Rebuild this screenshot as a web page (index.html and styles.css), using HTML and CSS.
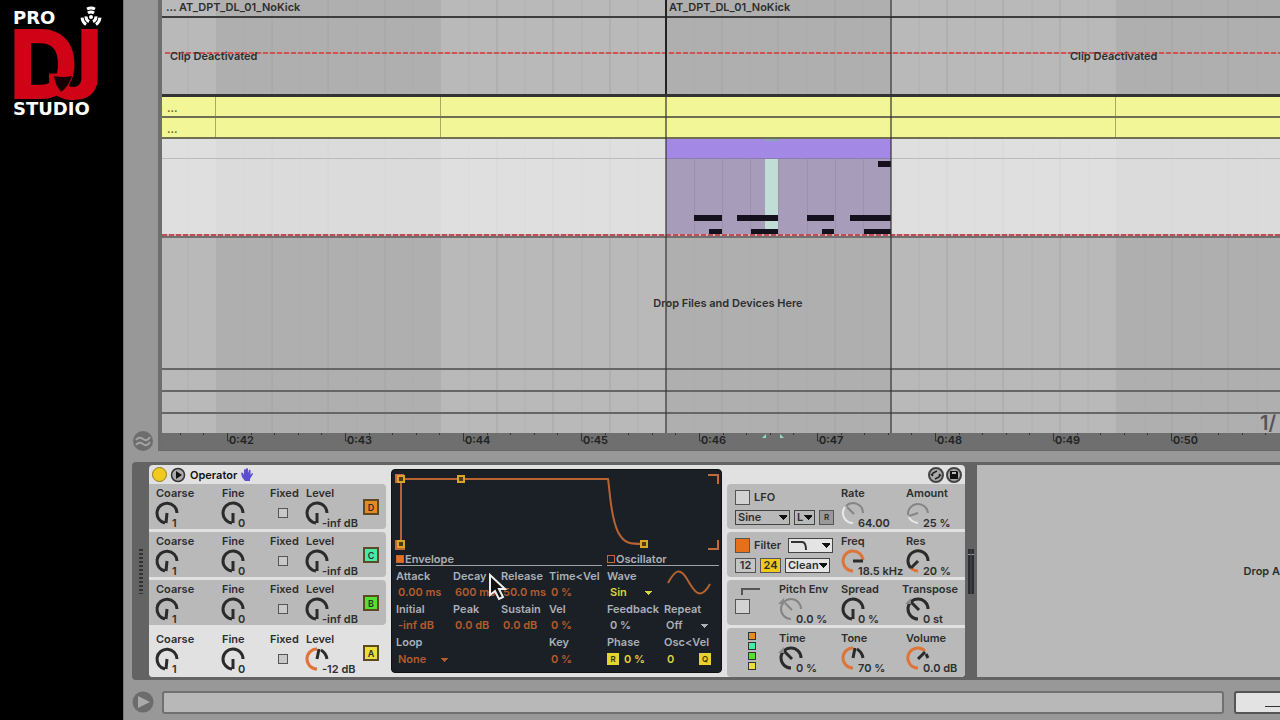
FILE: index.html
```html
<!DOCTYPE html>
<html lang="en">
<head>
<meta charset="utf-8">
<title>Arrangement – Operator</title>
<link rel="stylesheet" href="styles.css">
</head>
<body>
<svg class="defs" aria-hidden="true">
  <defs>
    <symbol id="dial-min" viewBox="0 0 24 24"><path d="M11 22A10 10 0 1 1 22 12M12 12V22"/></symbol>
    <symbol id="dial-one" viewBox="0 0 24 24"><path d="M10 22A10 10 0 1 1 22 12M12 12L11 22"/></symbol>
    <symbol id="dial-diag" viewBox="0 0 24 24"><path d="M12 22A10 10 0 1 1 22 12M13 13L6 6"/></symbol>
    <g id="blade"><path d="M-3 -4Q0 -6 3 -4"/><path d="M-4 -8Q0 -10 4 -8"/></g>
  </defs>
</svg>

<aside class="brand">
  <div class="brand-top"><span>PRO</span>
    <svg width="24" height="22" viewBox="0 0 24 22" fill="none" stroke="#fff" stroke-width="3"><circle cx="12" cy="12" r="2" fill="#fff" stroke="none"/><use href="#blade" transform="translate(12 12)"/><use href="#blade" transform="translate(12 12) rotate(120)"/><use href="#blade" transform="translate(12 12) rotate(240)"/></svg>
  </div>
  <div class="brand-mark"><span>D</span><span class="brand-j">J</span>
    <svg class="brand-cut" width="20" height="18" viewBox="0 0 20 18"><path d="M1 1Q10 3 19 1Q16 11 8 17Q2 10 1 1Z"/></svg>
  </div>
  <div class="brand-bottom">STUDIO</div>
</aside>

<main class="app">
  <section class="arrange">
    <div class="gutter">
      <button class="round" aria-label="Show envelope"><svg width="20" height="20" viewBox="0 0 20 20"><circle cx="10" cy="10" r="10" fill="#6d6d6d"/><path d="M3 9Q6 5 10 8T17 6M3 14Q6 10 10 13T17 11" fill="none" stroke="#a3a3a3" stroke-width="2"/></svg></button>
    </div>
    <div class="timeline">
      <div class="tracks">
        <svg class="grid" width="100%" height="100%">
          <defs><pattern id="bars" x="54" width="450" height="600" patternUnits="userSpaceOnUse">
            <rect width="450" height="600" fill="#b9b9b9"/><rect width="225" height="600" fill="#afafaf"/>
            <path d="M28 0V600M84 0V600M141 0V600M197 0V600M253 0V600M309 0V600M366 0V600M422 0V600" stroke="#a9a9a9" opacity=".6"/>
            <path d="M56 0V600M112 0V600M169 0V600M281 0V600M337 0V600M394 0V600" stroke="#a0a0a0" opacity=".75"/>
          </pattern></defs>
          <rect width="100%" height="100%" fill="url(#bars)"/>
        </svg>
        <div class="lane names"><span class="name-a">... AT_DPT_DL_01_NoKick</span><span>AT_DPT_DL_01_NoKick</span></div>
        <div class="lane audio"><span class="off-a">Clip Deactivated</span><span>Clip Deactivated</span></div>
        <div class="lane yellow">...</div>
        <div class="lane yellow">...</div>
        <div class="lane midi">
          <svg class="clip" width="225" height="97" viewBox="0 0 225 97">
            <rect width="225" height="97" fill="#a79dbb"/>
            <path d="M28.500 19V97M56.500 19V97M84.500 19V97M112.500 19V97M141.500 19V97M169.500 19V97M197.500 19V97" stroke="#9c92b0"/>
            <rect x="99" y="19" width="13" height="73" fill="#c1ded6"/>
            <rect width="225" height="19" fill="#a488e6"/><rect x="99" width="13" height="2" fill="#86a5b8"/>
            <path d="M0 19.500H225" stroke="#8b7cae"/>
            <path d="M212 22h13v6h-13zM28 76h28v6h-28zM71 76h41v6h-41zM141 76h27v6h-27zM184 76h41v6h-41zM43 90h13v5h-13zM85 90h27v5h-27zM156 90h12v5h-12zM198 90h27v5h-27z" fill="#15111c"/>
          </svg>
        </div>
        <div class="lane drop">Drop Files and Devices Here</div>
        <div class="lane thin"></div>
        <div class="lane thin"></div>
        <div class="lane last"><span>1/</span></div>
        <i class="edge edge-start"></i><i class="edge edge-dark"></i><i class="edge edge-end"></i>
      </div>
      <div class="ruler">
        <svg class="ticks" width="100%" height="10"><defs><pattern id="ticks" x="65" width="118" height="10" patternUnits="userSpaceOnUse"><path d="M.5 0V8H3" fill="none" stroke="#333"/><path d="M24.500 0V2M47.500 0V2M71.500 0V2M94.500 0V2" stroke="#333"/></pattern></defs><rect width="100%" height="10" fill="url(#ticks)"/><path d="M600 5l4-4v4zM618 1l4 4h-4z" fill="#8fdcc8"/></svg>
        <span>0:42</span><span>0:43</span><span>0:44</span><span>0:45</span><span>0:46</span><span>0:47</span><span>0:48</span><span>0:49</span><span>0:50</span>
      </div>
    </div>
  </section>

  <section class="rack">
    <div class="handle"><i></i></div>
    <div class="device">
      <div class="oscs">
        <header class="title">
          <button class="power" aria-label="Device on"></button>
          <button class="round" aria-label="Fold"><svg width="16" height="16" viewBox="0 0 16 16"><circle cx="8" cy="8" r="6.500" fill="#aaa" stroke="#333" stroke-width="1.500"/><path d="M6 4L12 8L6 12Z" fill="#111"/></svg></button>
          <h1>Operator</h1>
          <svg width="12" height="13" viewBox="0 0 12 13" fill="#5b4fd0"><path d="M3 7V2Q4 0 5 2V5V1Q6-1 7 1V5L8 2Q10 1 9.500 3V7L11 5Q12 5 12 6L9 11V13H4L1 9L0 5Q1 4 2 5Z"/></svg>
        </header>
        <div class="osc">
          <div class="param"><label for="c1">Coarse</label><div class="knob"><svg><use href="#dial-one"/></svg><input type="range" id="c1"><output>1</output></div></div>
          <div class="param"><label for="f1">Fine</label><div class="knob"><svg><use href="#dial-min"/></svg><input type="range" id="f1"><output>0</output></div></div>
          <div class="param fixed"><label for="x1">Fixed</label><input type="checkbox" id="x1"></div>
          <div class="param"><label for="l1">Level</label><div class="knob"><svg><use href="#dial-min"/></svg><input type="range" id="l1"><output>-inf dB</output></div></div>
          <button class="letter orange">D</button>
        </div>
        <div class="osc">
          <div class="param"><label for="c2">Coarse</label><div class="knob"><svg><use href="#dial-one"/></svg><input type="range" id="c2"><output>1</output></div></div>
          <div class="param"><label for="f2">Fine</label><div class="knob"><svg><use href="#dial-min"/></svg><input type="range" id="f2"><output>0</output></div></div>
          <div class="param fixed"><label for="x2">Fixed</label><input type="checkbox" id="x2"></div>
          <div class="param"><label for="l2">Level</label><div class="knob"><svg><use href="#dial-min"/></svg><input type="range" id="l2"><output>-inf dB</output></div></div>
          <button class="letter mint">C</button>
        </div>
        <div class="osc">
          <div class="param"><label for="c3">Coarse</label><div class="knob"><svg><use href="#dial-one"/></svg><input type="range" id="c3"><output>1</output></div></div>
          <div class="param"><label for="f3">Fine</label><div class="knob"><svg><use href="#dial-min"/></svg><input type="range" id="f3"><output>0</output></div></div>
          <div class="param fixed"><label for="x3">Fixed</label><input type="checkbox" id="x3"></div>
          <div class="param"><label for="l3">Level</label><div class="knob"><svg><use href="#dial-min"/></svg><input type="range" id="l3"><output>-inf dB</output></div></div>
          <button class="letter green">B</button>
        </div>
        <div class="osc active">
          <div class="param"><label for="c4">Coarse</label><div class="knob"><svg><use href="#dial-one"/></svg><input type="range" id="c4"><output>1</output></div></div>
          <div class="param"><label for="f4">Fine</label><div class="knob"><svg><use href="#dial-min"/></svg><input type="range" id="f4"><output>0</output></div></div>
          <div class="param fixed"><label for="x4">Fixed</label><input type="checkbox" id="x4"></div>
          <div class="param"><label for="l4">Level</label><div class="knob"><svg viewBox="0 0 24 24"><path class="hot" d="M12 22A10 10 0 0 1 12 2"/><path d="M12 12L14 2M16 3Q21 6 22 12"/></svg><input type="range" id="l4"><output>-12 dB</output></div></div>
          <button class="letter yellowish">A</button>
        </div>
      </div>

      <div class="display">
        <svg class="curve" width="331" height="82" viewBox="0 0 331 82" fill="none">
          <path d="M10 75V9H217C219 20 219 45 227 62C233 74 240 74 253 74" stroke="#b86432" stroke-width="2"/>
          <path d="M317 5H327V14M317 79H327V70M5 70V79H14M5 13V5H13" stroke="#c06c3a" stroke-width="2"/>
          <path d="M7 6h6v6h-6zM67 6h6v6h-6zM7 71h6v6h-6zM250 71h6v6h-6z" fill="#4a3a16" stroke="#d9a428" stroke-width="2"/>
        </svg>
        <div class="halves">
          <div class="half">
            <h2><i class="tab on"></i>Envelope</h2>
            <div class="table env">
              <label>Attack</label><label>Decay</label><label>Release</label><label>Time&lt;Vel</label>
              <output>0.00 ms</output><output>600 ms</output><output>50.0 ms</output><output>0 %</output>
              <label>Initial</label><label>Peak</label><label>Sustain</label><label>Vel</label>
              <output>-inf dB</output><output>0.0 dB</output><output>0.0 dB</output><output>0 %</output>
              <label for="loop">Loop</label><span></span><span></span><label>Key</label>
              <select id="loop" class="hotsel"><option>None</option></select><output>0 %</output>
            </div>
          </div>
          <div class="half">
            <h2><i class="tab"></i>Oscillator</h2>
            <div class="table wave">
              <label for="wave">Wave</label><svg class="sine" width="44" height="26" viewBox="0 0 44 26" fill="none" stroke="#b5622f" stroke-width="2"><path d="M1 13C8 0 13-3 20 9S33 32 43 14"/></svg>
              <select id="wave" class="sunsel"><option>Sin</option></select>
              <label>Feedback</label><label for="rep">Repeat</label>
              <output class="pale">0 %</output><select id="rep" class="palesel"><option>Off</option></select>
              <label>Phase</label><label>Osc&lt;Vel</label>
              <div class="pair"><button class="mini">R</button><output>0 %</output></div><div class="pair spread"><output>0</output><button class="mini">Q</button></div>
            </div>
          </div>
        </div>
      </div>

      <div class="global">
        <div class="tools">
          <button class="round" aria-label="Hot-swap"><svg width="16" height="16" viewBox="0 0 16 16"><circle cx="8" cy="8" r="7" fill="#aaa" stroke="#444" stroke-width="2"/><path d="M4 9L5 6L9 4M5 9L3 7M12 7L11 10L7 12M11 7L13 9" stroke="#222" fill="none" stroke-width="1.500"/></svg></button>
          <button class="round" aria-label="Save preset"><svg width="16" height="16" viewBox="0 0 16 16"><circle cx="8" cy="8" r="7" fill="#aaa" stroke="#444" stroke-width="2"/><path d="M4 4H11L12 5V12H4Z" fill="#111"/><path d="M6 5H10V7H6Z" fill="#bbb"/></svg></button>
        </div>
        <div class="cell">
          <div class="opts">
            <div class="opt"><input type="checkbox" id="lfo"><label for="lfo">LFO</label></div>
            <div class="opt"><select class="box w-sine" aria-label="LFO shape"><option>Sine</option></select><select class="box w-l" aria-label="LFO range"><option>L</option></select><button class="flat r">R</button></div>
          </div>
          <div class="param"><label for="rate">Rate</label><div class="knob dim"><svg viewBox="0 0 24 24"><path d="M5 5A10 10 0 0 1 22 12M13 13L6 6"/><path class="lit" d="M12 22A10 10 0 0 1 4 6"/></svg><input type="range" id="rate"><output>64.00</output></div></div>
          <div class="param"><label for="amt">Amount</label><div class="knob dim"><svg viewBox="0 0 24 24"><path d="M2 14A10 10 0 0 1 22 12M12 12L3 15"/><path class="lit" d="M12 22Q5 21 3 16"/></svg><input type="range" id="amt"><output>25 %</output></div></div>
        </div>
        <div class="cell">
          <div class="opts">
            <div class="opt"><input type="checkbox" id="filter" checked><label for="filter">Filter</label><button class="box shape" aria-label="Filter type"><svg width="38" height="12" viewBox="0 0 38 12"><path d="M0 3H11Q15 3 15 11" fill="none" stroke="#333" stroke-width="2"/></svg></button></div>
            <div class="opt"><button class="flat num">12</button><button class="flat num sel">24</button><select class="box light w-clean" aria-label="Circuit"><option>Clean</option></select></div>
          </div>
          <div class="param"><label for="freq">Freq</label><div class="knob"><svg viewBox="0 0 24 24"><path class="hot" d="M12 22A10 10 0 1 1 22 11"/><path d="M12 12H22"/></svg><input type="range" id="freq"><output>18.5 kHz</output></div></div>
          <div class="param"><label for="res">Res</label><div class="knob"><svg viewBox="0 0 24 24"><path class="hot" d="M12 22Q8 22 5 19"/><path d="M5 19A10 10 0 1 1 22 12M12 12L5 19"/></svg><input type="range" id="res"><output>20 %</output></div></div>
        </div>
        <div class="cell three">
          <div class="opts pitch"><svg width="19" height="7" viewBox="0 0 19 7"><path d="M1 7V1H19" fill="none" stroke="#555" stroke-width="2"/></svg><input type="checkbox" aria-label="Pitch envelope on"></div>
          <div class="param"><label for="pe">Pitch Env</label><div class="knob grey shifted"><svg><use href="#dial-diag"/></svg><input type="range" id="pe"><output>0.0 %</output></div></div>
          <div class="param"><label for="spr">Spread</label><div class="knob"><svg><use href="#dial-min"/></svg><input type="range" id="spr"><output>0 %</output></div></div>
          <div class="param wide"><label for="tr">Transpose</label><div class="knob shifted"><svg><use href="#dial-diag"/></svg><input type="range" id="tr"><output>0 st</output></div></div>
        </div>
        <div class="cell three">
          <div class="opts algo"><i class="orange"></i><i class="mint"></i><i class="green"></i><i class="yellowish"></i></div>
          <div class="param"><label for="tm">Time</label><div class="knob shifted"><svg><use href="#dial-diag"/></svg><input type="range" id="tm"><output>0 %</output></div></div>
          <div class="param"><label for="tone">Tone</label><div class="knob"><svg viewBox="0 0 24 24"><path class="hot" d="M12 22A10 10 0 0 1 12 2"/><path d="M12 12L14 2M16 3Q21 6 22 12"/></svg><input type="range" id="tone"><output>70 %</output></div></div>
          <div class="param"><label for="vol">Volume</label><div class="knob"><svg viewBox="0 0 24 24"><path class="hot" d="M12 22A10 10 0 1 1 19 5"/><path d="M12 13L19 6M20 8L22 12"/></svg><input type="range" id="vol"><output>0.0 dB</output></div></div>
        </div>
      </div>
    </div>
    <div class="meter"><svg width="6" height="45" viewBox="0 0 6 45"><path d="M0 0h6v45h-6z" fill="#2b2d33"/><path d="M0 5.500H6" stroke="#999"/><path d="M3 0V45" stroke="#4a4d54"/></svg></div>
    <div class="dropzone">Drop A</div>
    <svg class="pointer" width="20" height="28" viewBox="0 0 20 28"><path d="M2 2V22L7 18L11 26L15 24L11 16H17Z" fill="#111" stroke="#eee" stroke-width="2"/></svg>
  </section>

  <footer class="status">
    <button class="round" aria-label="Play"><svg width="22" height="22" viewBox="0 0 22 22"><circle cx="11" cy="11" r="10.500" fill="#6c6c6c"/><path d="M6 5L18 11L6 17Z" fill="#aaa"/></svg></button>
    <div class="info"></div>
    <div class="overview"><i></i></div>
  </footer>
</main>
</body>
</html>
```
FILE: styles.css
```css
* { box-sizing: border-box; }
body {
  margin: 0;
  min-height: 100vh;
  display: flex;
  overflow: hidden;
  background: #000;
  color: #2e2e2e;
  font: 600 11px/14px Inter, "Liberation Sans", sans-serif;
}
button, select, input { font: inherit; color: inherit; margin: 0; padding: 0; }
button { border: 0; background: none; line-height: 1; }
h1, h2 { margin: 0; font: inherit; }
svg { display: block; flex: none; }
.defs { position: absolute; width: 0; height: 0; }

/* Brand */
.brand { flex: 0 0 123px; padding: 5px 0 0 13px; color: #fff; font: 700 18px/18px "DejaVu Sans", sans-serif; }
.brand-top { display: flex; width: 90px; justify-content: space-between; height: 22px; }
.brand-top span { padding-top: 4px; }
.brand-mark { position: relative; display: flex; height: 73px; margin-left: -4px; color: #d00216; font: 800 96px/75px Inter, sans-serif; }
.brand-j { margin-left: -32px; }
.brand-cut { position: absolute; left: 44px; top: 48px; fill: #160204; }

.app { flex: 1; min-width: 0; display: flex; flex-direction: column; background: #989898; border-left: 1px solid #777; }
.round { display: block; border-radius: 50%; }

/* Arrangement */
.arrange { display: flex; }
.gutter { flex: 0 0 34px; display: flex; align-items: flex-end; justify-content: flex-end; padding: 0 5px 0 0; }
.timeline { flex: 1; min-width: 0; border-left: 4px solid #6e6e6e; border-bottom: 1px solid #666; }
.tracks { position: relative; }
.grid { position: absolute; inset: 0; }
.lane { position: relative; border-bottom: 2px solid #666; white-space: nowrap; overflow: hidden; }
.names { height: 18px; display: flex; padding-left: 4px; border-color: #3d3d3d; }
.name-a { flex: 0 0 503px; }
.audio { height: 79px; display: flex; padding: 31px 0 0 8px; border-bottom: 3px solid #333; }
.audio::before { content: ""; position: absolute; left: 3px; right: 0; top: 34px; height: 2px; background: repeating-linear-gradient(90deg, #cd5454 0 5px, #b9a0a0 5px 7px); }
.off-a { flex: 0 0 900px; }
.audio span { position: relative; }
.yellow { height: 21px; padding: 4px 0 0 5px; border-color: #6f6f54; color: #66663c; background: linear-gradient(90deg, #a8a967, #a8a967) 53px 0/1px 100% no-repeat, linear-gradient(90deg, #a8a967, #a8a967) 278px 0/1px 100% no-repeat, linear-gradient(90deg, #a8a967, #a8a967) 953px 0/1px 100% no-repeat, #f3f696; }
.midi { height: 99px; background: linear-gradient(#bbb, #bbb) 0 19px/100% 1px no-repeat, rgba(255, 255, 255, .55); border-color: #707070; }
.midi::after { content: ""; position: absolute; left: 0; right: 0; bottom: 0; height: 2px; background: repeating-linear-gradient(90deg, #bf4d55 0 5px, #cfafb2 5px 7px); }
.clip { position: absolute; left: 504px; top: 0; }
.drop { height: 132px; padding-left: 14px; display: flex; align-items: center; justify-content: center; }
.thin { height: 22px; }
.last { height: 19px; border: 0; display: flex; justify-content: flex-end; color: #555; font-size: 20px; line-height: 19px; }
.last span { flex: 0 0 20px; }
.edge { position: absolute; top: 0; bottom: 0; width: 2px; background: rgba(50, 50, 50, .6); }
.edge-start { left: 503px; top: 94px; }
.edge-dark { left: 503px; bottom: auto; height: 94px; background: #222; }
.edge-end { left: 728px; }
.ruler { position: relative; display: flex; height: 17px; padding-left: 67px; background: #6f6f6f; color: #222; }
.ruler span { position: relative; flex: 0 0 118px; }
.ticks { position: absolute; left: 0; top: 0; }

/* Device rack */
.rack { position: relative; display: flex; height: 218px; margin: 11px 0 0 8px; padding: 3px 0; background: #636363; border-radius: 4px 0 0 4px; }
.handle { flex: 0 0 17px; display: flex; align-items: center; justify-content: center; }
.handle i { width: 4px; height: 45px; background: repeating-linear-gradient(#333 0 2px, #636363 2px 4px); }
.device { display: flex; flex: none; background: #e1e1e1; border-radius: 4px; overflow: hidden; }
.oscs { width: 238px; display: flex; flex-direction: column; }
.title { display: flex; align-items: center; gap: 4px; height: 19px; padding-left: 3px; }
.title h1 { color: #111; }
.power { width: 15px; height: 15px; margin-right: -1px; border: 1px solid #8d7b2c; border-radius: 50%; background: #f2c91d; }
.osc, .cell { height: 45px; margin-bottom: 3px; padding: 2px 0 0 7px; background: #b9b9b9; border-radius: 0 4px 4px 0; display: grid; }
.osc { width: 237px; grid-template-columns: 66px 48px 36px 57px 16px; }
.osc.active { background: #e1e1e1; flex: 1; margin: 0; padding-top: 4px; }
.param { position: relative; display: flex; flex-direction: column; white-space: nowrap; align-items: flex-start; }
.fixed input { margin: 8px 0 0 8px; width: 10px; height: 10px; }
.knob { position: relative; display: flex; align-items: flex-end; height: 24px; margin-top: 1px; }
.osc .knob { margin-left: -1px; }
.knob svg { width: 24px; height: 24px; fill: none; stroke: #2b2b2b; stroke-width: 3; }
.knob output { position: relative; margin: 0 0 -5px -7px; }
.knob input { position: absolute; left: 0; top: 0; width: 24px; height: 24px; opacity: 0; }
.knob .hot { stroke: #de7438; }
.knob .lit { stroke: #e8e8e8; }
.knob.dim svg, .knob.grey svg { stroke: #858585; stroke-width: 2; }
.shifted::before { content: ""; position: absolute; top: 1px; left: -1px; border: 3px solid transparent; border-right-color: #888; border-bottom-color: #888; }
input[type="checkbox"] { appearance: none; flex: none; border: 1px solid #555; background: #c9c9c9; }
.letter { width: 16px; height: 16px; margin-top: 13px; border: 2px solid #5d4a24; font-size: 9px; }
.orange { background: #e68a24; }
.mint { background: #46eca5; }
.green { background: #52e22f; }
.yellowish { background: #eade3e; }

/* Envelope and oscillator display */
.display { width: 331px; margin: 4px 5px 4px 4px; background: #1b2027; border: 1px solid #111; border-radius: 4px; color: #aab0b7; display: flex; flex-direction: column; }
.curve { margin: 0 -1px; }
.halves { display: flex; justify-content: space-between; padding: 0 2px 0 4px; }
.half h2 { display: flex; align-items: center; height: 14px; border-bottom: 1px solid #9da3aa; }
.tab { width: 8px; height: 8px; margin-right: 1px; border: 1px solid #c9652b; }
.tab.on { background: #e96c22; }
.table { display: grid; grid-template-rows: 17px 15px 19px 13px 22px 12px; padding-top: 1px; white-space: nowrap; align-items: center; }
.env { grid-template-columns: 57px 48px 48px 53px; }
.env output, .hotsel { color: #b35c2c; padding-left: 2px; }
.wave { grid-template-columns: 57px 55px; }
.wave output { color: #ddd43c; padding-left: 3px; }
.wave output.pale { color: #aab0b7; }
.sine { grid-row: span 2; margin-left: 3px; }
.table select { appearance: none; border: 0; height: 14px; background: conic-gradient(from 315deg at 50% 100%, currentColor 90deg, transparent 0) 100% 60%/7px 4px no-repeat; }
.hotsel { grid-column: span 3; width: 52px; }
.sunsel { width: 45px; padding-left: 3px; color: #ddd43c; }
.palesel { width: 44px; padding-left: 2px; }
.pair { display: flex; align-items: center; gap: 2px; }
.pair.spread { justify-content: space-between; padding-right: 8px; }
.mini { width: 12px; height: 12px; background: #e5d32f; color: #3a3310; font-size: 8px; }

/* Global controls */
.global { width: 238px; display: flex; flex-direction: column; }
.tools { height: 19px; display: flex; justify-content: flex-end; align-items: center; gap: 2px; padding-right: 3px; }
.cell { grid-template-columns: 108px 65px 1fr; padding-left: 6px; border-radius: 4px 0 0 4px; }
.cell:last-child { flex: 1; margin: 0; padding-top: 3px; }
.three { grid-template-columns: 46px 62px 65px 1fr; }
.opts { display: flex; flex-direction: column; gap: 4px; padding: 3px 0 0 2px; }
.opt { display: flex; align-items: center; gap: 4px; height: 16px; }
.opt input, .pitch input { width: 15px; height: 15px; background: #d2d2d2; }
.opt input:checked { background: #e66f1c; }
.box { appearance: none; height: 15px; padding-left: 2px; border: 1px solid #444; border-radius: 0; background: conic-gradient(from 315deg at 50% 100%, #111 90deg, transparent 0) right 2px center/8px 5px no-repeat, #b9b9b9; line-height: 13px; }
.w-sine { width: 55px; }
.w-l { width: 21px; }
.box.light, .box.shape { background-color: #e4e4e4; }
.w-clean { width: 45px; }
.flat { height: 15px; border: 1px solid #555; background: #c4c4c4; }
.flat.r { width: 15px; background: #999; font-size: 8px; }
.num { width: 21px; }
.num.sel { background: #f1c81c; }
.shape { width: 45px; margin-left: auto; margin-right: 8px; }
.pitch { gap: 3px; padding-top: 6px; }
.pitch svg { margin-left: 6px; }
.pitch input { margin-top: 1px; }
.algo { gap: 2px; padding: 1px 0 0 15px; }
.algo i { width: 8px; height: 8px; border: 1px solid #333; }
.wide label { margin-left: -4px; }
.meter { flex: 0 0 12px; display: flex; align-items: center; justify-content: center; }
.dropzone { flex: 1; min-width: 0; display: flex; align-items: center; justify-content: flex-end; background: #b9b9b9; white-space: nowrap; }
.pointer { position: absolute; left: 356px; top: 111px; }

/* Status bar */
.status { flex: 1; display: flex; align-items: center; padding: 4px 0 0 8px; }
.info { flex: 1; height: 23px; margin-left: 8px; border: 2px solid #707070; border-radius: 3px; background: #b8b8b8; }
.overview { width: 46px; height: 23px; margin-left: 10px; padding: 13px 0 0 29px; border: 2px solid #555; border-right: 0; border-radius: 3px 0 0 3px; background: #e3e3e3; }
.overview i { display: block; height: 1px; background: #333; }
```
